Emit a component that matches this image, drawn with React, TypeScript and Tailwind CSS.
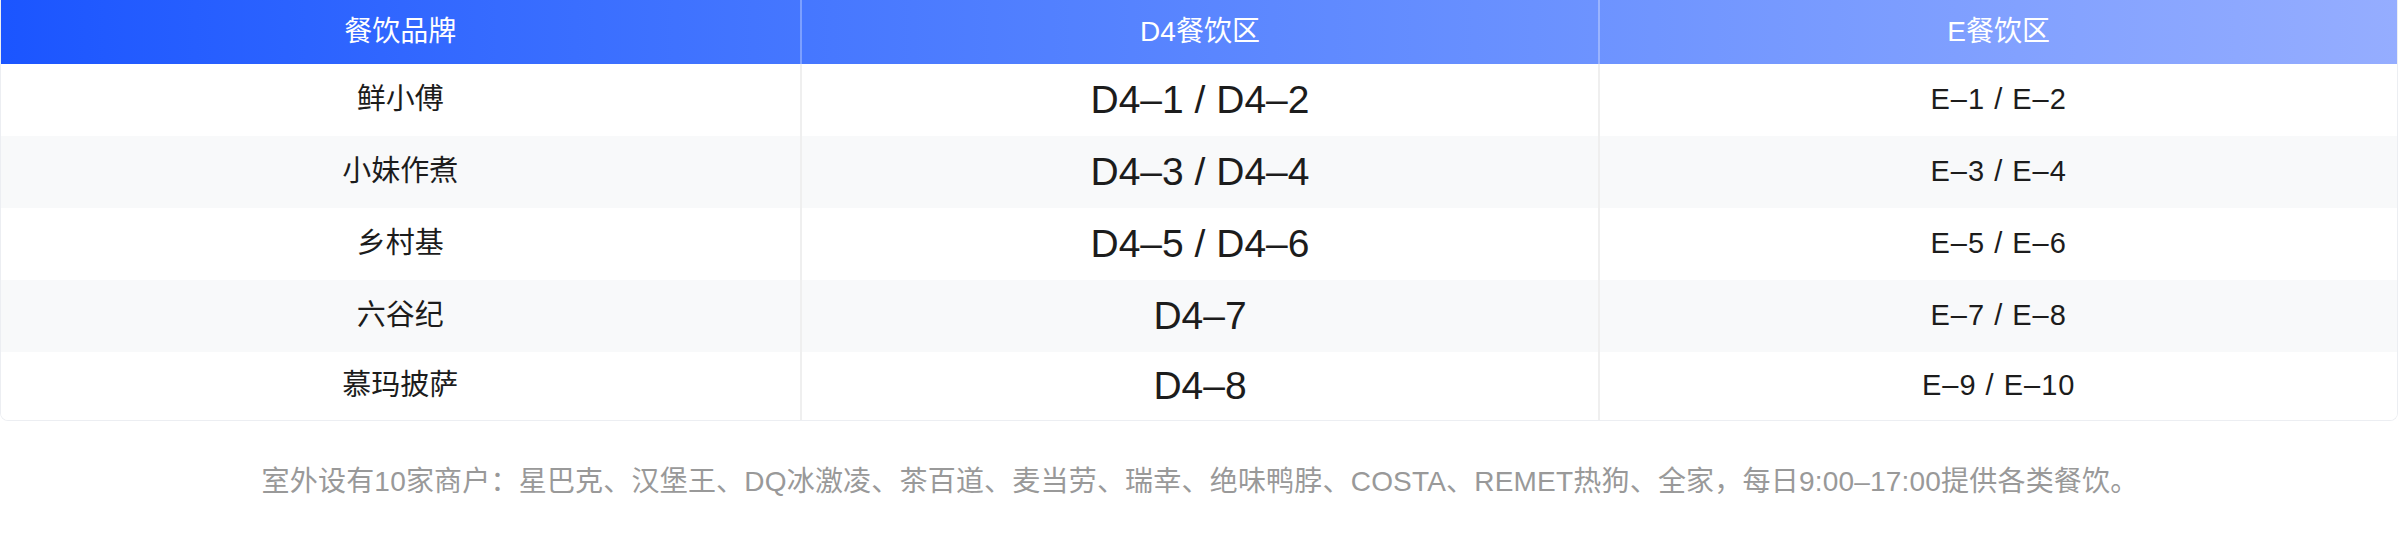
import React from "react";

interface ShopRow {
  brand: string;
  d4: string;
  e: string;
}

const rows: ShopRow[] = [
  { brand: "鲜小傅", d4: "D4–1 / D4–2", e: "E–1 / E–2" },
  { brand: "小妹作煮", d4: "D4–3 / D4–4", e: "E–3 / E–4" },
  { brand: "乡村基", d4: "D4–5 / D4–6", e: "E–5 / E–6" },
  { brand: "六谷纪", d4: "D4–7", e: "E–7 / E–8" },
  { brand: "慕玛披萨", d4: "D4–8", e: "E–9 / E–10" },
];

const App: React.FC = () => {
  return (
    <div
      className="w-[2400px] h-[542px] bg-white flex flex-col"
      style={{ fontFamily: '"Liberation Sans", "Noto Sans CJK SC", sans-serif' }}
    >
      <div className="w-[2398px] border-x border-b border-[#eceef2] rounded-b-lg overflow-hidden">
        {/* header */}
        <div className="grid grid-cols-3 h-16 bg-gradient-to-r from-[#1b55ff] to-[#95adff] text-white text-[28px]">
          <div className="flex items-center justify-center">餐饮品牌</div>
          <div className="flex items-center justify-center border-l-2 border-white/30">D4餐饮区</div>
          <div className="flex items-center justify-center border-l-2 border-white/30">E餐饮区</div>
        </div>

        {rows.map((row, i) => (
          <div
            key={row.brand}
            className={`grid grid-cols-3 h-[72px] last:h-[68px] text-[#1c1c1c] ${i % 2 === 1 ? "bg-[#f8f9fa]" : "bg-white"}`}
          >
            <div className="flex items-center justify-center text-[29px]">{row.brand}</div>
            <div className="flex items-center justify-center border-l-2 border-[#efefef] text-[39px]">{row.d4}</div>
            <div className="flex items-center justify-center border-l-2 border-[#efefef] text-[29px] tracking-[1px]">{row.e}</div>
          </div>
        ))}
      </div>

      <p className="flex-1 flex items-center justify-center text-[28px] tracking-[0.2px] text-[#999999]">
        室外设有10家商户：星巴克、汉堡王、DQ冰激凌、茶百道、麦当劳、瑞幸、绝味鸭脖、COSTA、REMET热狗、全家，每日9:00–17:00提供各类餐饮。
      </p>
    </div>
  );
};

export default App;
